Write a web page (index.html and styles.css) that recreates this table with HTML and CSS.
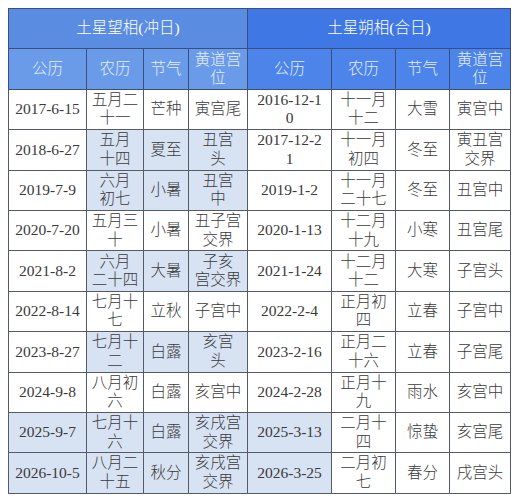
FILE: index.html
```html
<!DOCTYPE html>
<html lang="zh-CN">
<head>
<meta charset="utf-8">
<link rel="stylesheet" href="styles.css">
</head>
<body>
<table class="tbl">
  <colgroup>
    <col class="c1"><col class="c2"><col class="c3"><col class="c4">
    <col class="c5"><col class="c6"><col class="c7"><col class="c8">
  </colgroup>
  <tr class="title">
    <th colspan="4" class="tl">土星望相(冲日)</th>
    <th colspan="4" class="tr">土星朔相(合日)</th>
  </tr>
  <tr class="head">
    <th class="hl">公历</th><th class="hl">农历</th><th class="hl">节气</th><th class="hl">黄道宫<br>位</th>
    <th class="hr">公历</th><th class="hr">农历</th><th class="hr">节气</th><th class="hr">黄道宫<br>位</th>
  </tr>
  <tr>
    <td>2017-6-15</td><td>五月二<br>十一</td><td>芒种</td><td>寅宫尾</td>
    <td>2016-12-1<br>0</td><td>十一月<br>十二</td><td>大雪</td><td>寅宫中</td>
  </tr>
  <tr>
    <td>2018-6-27</td><td class="hi">五月<br>十四</td><td class="hi">夏至</td><td class="hi">丑宫<br>头</td>
    <td>2017-12-2<br>1</td><td>十一月<br>初四</td><td>冬至</td><td>寅丑宫<br>交界</td>
  </tr>
  <tr>
    <td>2019-7-9</td><td class="hi">六月<br>初七</td><td class="hi">小暑</td><td class="hi">丑宫<br>中</td>
    <td>2019-1-2</td><td>十一月<br>二十七</td><td>冬至</td><td>丑宫中</td>
  </tr>
  <tr>
    <td>2020-7-20</td><td>五月三<br>十</td><td>小暑</td><td>丑子宫<br>交界</td>
    <td>2020-1-13</td><td>十二月<br>十九</td><td>小寒</td><td>丑宫尾</td>
  </tr>
  <tr>
    <td>2021-8-2</td><td class="hi">六月<br>二十四</td><td class="hi">大暑</td><td class="hi">子亥<br>宫交界</td>
    <td>2021-1-24</td><td>十二月<br>十二</td><td>大寒</td><td>子宫头</td>
  </tr>
  <tr>
    <td>2022-8-14</td><td>七月十<br>七</td><td>立秋</td><td>子宫中</td>
    <td>2022-2-4</td><td>正月初<br>四</td><td>立春</td><td>子宫中</td>
  </tr>
  <tr>
    <td>2023-8-27</td><td class="hi">七月十<br>二</td><td class="hi">白露</td><td class="hi">亥宫<br>头</td>
    <td>2023-2-16</td><td>正月二<br>十六</td><td>立春</td><td>子宫尾</td>
  </tr>
  <tr>
    <td>2024-9-8</td><td>八月初<br>六</td><td>白露</td><td>亥宫中</td>
    <td>2024-2-28</td><td>正月十<br>九</td><td>雨水</td><td>亥宫中</td>
  </tr>
  <tr>
    <td class="hi">2025-9-7</td><td class="hi">七月十<br>六</td><td class="hi">白露</td><td class="hi">亥戌宫<br>交界</td>
    <td class="hi">2025-3-13</td><td>二月十<br>四</td><td>惊蛰</td><td>亥宫尾</td>
  </tr>
  <tr>
    <td class="hi">2026-10-5</td><td class="hi">八月二<br>十五</td><td class="hi">秋分</td><td class="hi">亥戌宫<br>交界</td>
    <td class="hi">2026-3-25</td><td>二月初<br>七</td><td>春分</td><td>戌宫头</td>
  </tr>
</table>
</body>
</html>
```

FILE: styles.css
```css
html, body {
  margin: 0;
  padding: 0;
  background: #ffffff;
}
body {
  padding: 8px;
  font-family: "Liberation Serif", "Noto Sans CJK SC", serif;
  color: #333333;
}
.tbl {
  border-collapse: collapse;
  table-layout: fixed;
  width: 502px;
  font-size: 15.5px;
  line-height: 18.5px;
}
.c1 { width: 78px; }
.c2 { width: 57px; }
.c3 { width: 45px; }
.c4 { width: 59px; }
.c5 { width: 84px; }
.c6 { width: 64px; }
.c7 { width: 54px; }
.c8 { width: 61px; }
.tbl th, .tbl td {
  border: 1px solid #555b66;
  padding: 0;
  text-align: center;
  vertical-align: middle;
  font-weight: 300;
  overflow: hidden;
  white-space: nowrap;
}
.tbl tr { height: 40.4px; }
.title { height: 41px; }
.head { height: 41px; }
.title th {
  color: #ffffff;
  font-size: 15.5px;
  border-color: #3a4f80;
}
.tl { background: #5a8ce2; }
.tr { background: #3f77e4; }
.head th {
  color: #e6eeff;
  border-color: #3a4f80;
}
.hl { background: #6a9be8; }
.hr { background: #4c84e9; }
.tbl td { color: #3a3a3a; }
.tbl td.hi { background: #d7e2f3; }
```
